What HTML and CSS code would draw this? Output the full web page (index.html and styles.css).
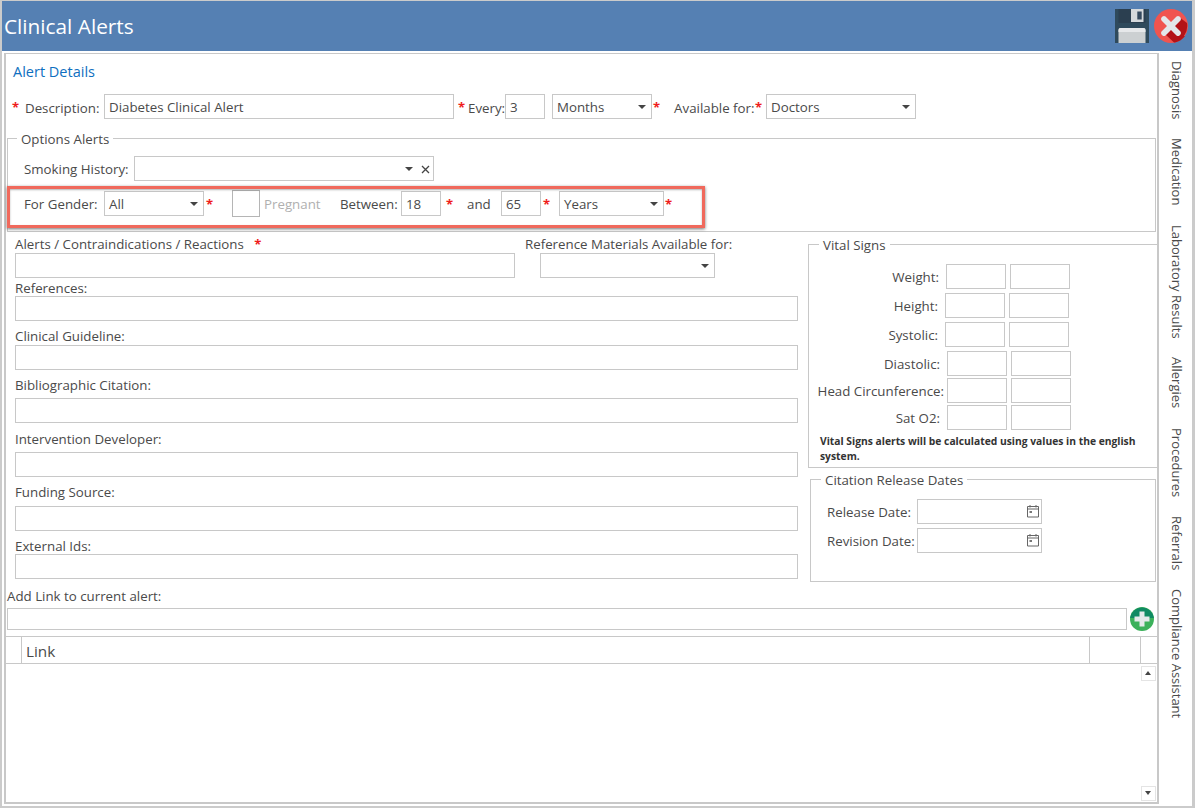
FILE: index.html
```html
<!DOCTYPE html>
<html lang="en">
<head>
<meta charset="utf-8">
<title>Clinical Alerts</title>
<link rel="stylesheet" href="styles.css">
</head>
<body>
<div class="window">
  <header class="titlebar">
    <h1 class="title">Clinical Alerts</h1>
    <div class="title-actions">
      <svg class="save-icon" viewBox="0 0 34 34" width="34" height="34"><path d="M0 0H34V34H0Z" fill="#2f4a5c"/><path d="M3.500 0H30.500V14H3.500Z" fill="#2b3f50"/><path d="M16 0H28.500V13H16Z" fill="#d5d9dc"/><path d="M22.300 2.500H26.700V10.500H22.300Z" fill="#34495e"/><path d="M3.500 21Q3.500 19 5.500 19H28.500Q30.500 19 30.500 21V34H3.500Z" fill="#ccd0d2"/><path d="M3.500 21Q3.500 19 5.500 19H28.500Q30.500 19 30.500 21V23H3.500Z" fill="#e6e8ea"/></svg>
      <svg class="close-icon" viewBox="0 0 34 34" width="34" height="34"><circle cx="17" cy="17" r="17" fill="#f0544f"/><path d="M14 27L31 27A17 17 0 0 1 21 33.5Z M25 8L33 14A17 17 0 0 1 20 33.5L11 25Z" fill="#b31217"/><path d="M11.5 7.5L17 13L22.5 7.5Q24 6.5 25.500 7.500L26.500 8.500Q27.500 10 26.500 11.500L21 17L26.500 22.500Q27.500 24 26.500 25.500L25.500 26.500Q24 27.500 22.500 26.500L17 21L11.500 26.500Q10 27.500 8.500 26.500L7.500 25.500Q6.500 24 7.500 22.500L13 17L7.500 11.500Q6.500 10 7.500 8.500L8.500 7.500Q10 6.500 11.500 7.500Z" fill="#e3e7ea"/></svg>
    </div>
  </header>

  <div class="workspace">
    <main class="panel">
      <h2 class="section-title">Alert Details</h2>

      <div class="row row-description">
        <span class="req req-first">*</span>
        <label class="lbl lbl-description">Description:</label>
        <div class="box w-350">Diabetes Clinical Alert</div>
        <span class="req req-every">*</span>
        <label class="lbl lbl-every">Every:</label>
        <div class="box w-40">3</div>
        <div class="box select w-100 ml-7">Months<i class="caret"></i></div>
        <span class="req req-tight">*</span>
        <label class="lbl lbl-available">Available for:</label>
        <span class="req req-tight req-available">*</span>
        <div class="box select w-150">Doctors<i class="caret"></i></div>
      </div>

      <fieldset class="group group-options">
        <legend class="legend">Options Alerts</legend>
        <div class="row row-smoking">
          <label class="lbl lbl-smoking">Smoking History:</label>
          <div class="box select w-300">
            <i class="caret caret-clear"></i>
            <svg class="clear-x" viewBox="0 0 9 9" width="9" height="9"><path d="M1 1L8 8M8 1L1 8" stroke="#444" stroke-width="1.300" fill="none"/></svg>
          </div>
        </div>
        <div class="row row-gender">
          <label class="lbl lbl-gender">For Gender:</label>
          <div class="box select w-100">All<i class="caret"></i></div>
          <span class="req req-gender">*</span>
          <div class="checkbox"></div>
          <span class="lbl muted">Pregnant</span>
          <label class="lbl lbl-between">Between:</label>
          <div class="box w-40">18</div>
          <span class="req req-18">*</span>
          <span class="lbl lbl-and">and</span>
          <div class="box w-40">65</div>
          <span class="req req-65">*</span>
          <div class="box select w-105 ml-9">Years<i class="caret"></i></div>
          <span class="req req-tight">*</span>
        </div>
        <div class="highlight"></div>
      </fieldset>

      <div class="columns">
        <div class="col-left">
          <div class="row-top">
            <div class="stack">
              <div class="lbl">Alerts / Contraindications / Reactions <span class="req req-alerts">*</span></div>
              <div class="box w-500"></div>
            </div>
            <div class="stack stack-ref">
              <div class="lbl">Reference Materials Available for:</div>
              <div class="box select w-175 ml-15"><i class="caret"></i></div>
            </div>
          </div>
          <div class="field field-ref"><div class="lbl">References:</div><div class="box wide"></div></div>
          <div class="field field-clin"><div class="lbl">Clinical Guideline:</div><div class="box wide"></div></div>
          <div class="field field-bib"><div class="lbl">Bibliographic Citation:</div><div class="box wide"></div></div>
          <div class="field field-dev"><div class="lbl">Intervention Developer:</div><div class="box wide"></div></div>
          <div class="field field-fund"><div class="lbl">Funding Source:</div><div class="box wide"></div></div>
          <div class="field field-ext"><div class="lbl">External Ids:</div><div class="box wide"></div></div>
        </div>

        <div class="col-right">
          <fieldset class="group group-vitals">
            <legend class="legend">Vital Signs</legend>
            <div class="vrow v-weight"><label class="lbl">Weight:</label><div class="box w-60"></div><div class="box w-60"></div></div>
            <div class="vrow v-height"><label class="lbl">Height:</label><div class="box w-60"></div><div class="box w-60"></div></div>
            <div class="vrow v-systolic"><label class="lbl">Systolic:</label><div class="box w-60"></div><div class="box w-60"></div></div>
            <div class="vrow v-diastolic"><label class="lbl">Diastolic:</label><div class="box w-60"></div><div class="box w-60"></div></div>
            <div class="vrow v-head"><label class="lbl">Head Circunference:</label><div class="box w-60"></div><div class="box w-60"></div></div>
            <div class="vrow v-sat"><label class="lbl">Sat O2:</label><div class="box w-60"></div><div class="box w-60"></div></div>
            <p class="note">Vital Signs alerts will be calculated using values in the english system.</p>
          </fieldset>
          <fieldset class="group group-citation">
            <legend class="legend">Citation Release Dates</legend>
            <div class="row row-date">
              <label class="lbl lbl-date">Release Date:</label>
              <div class="box date w-125"><svg class="cal" viewBox="0 0 14 14" width="14" height="14"><path d="M1.500 2.500H12.500V13H1.500Z M1.500 5H12.500 M4 1V3.500 M10 1V3.500" stroke="#666" fill="none"/><path d="M3.500 7H6V9H3.500Z" fill="#777"/></svg></div>
            </div>
            <div class="row row-date row-date-2">
              <label class="lbl lbl-date">Revision Date:</label>
              <div class="box date w-125"><svg class="cal" viewBox="0 0 14 14" width="14" height="14"><path d="M1.500 2.500H12.500V13H1.500Z M1.500 5H12.500 M4 1V3.500 M10 1V3.500" stroke="#666" fill="none"/><path d="M3.500 7H6V9H3.500Z" fill="#777"/></svg></div>
            </div>
          </fieldset>
        </div>
      </div>

      <div class="link-add">
        <div class="lbl">Add Link to current alert:</div>
        <div class="link-row">
          <div class="box link-input"></div>
          <svg class="plus-icon" viewBox="0 0 24 24" width="24" height="24"><circle cx="12" cy="12" r="12" fill="#3cb15b"/><path d="M0.100 11A12 12 0 0 1 23.900 11Z" fill="#108a63"/><path d="M9.500 4.500H14.500V9.500H19.500V14.500H14.500V19.500H9.500V14.500H4.500V9.500H9.500Z" fill="#e4e9ea"/></svg>
        </div>
      </div>

      <section class="table">
        <div class="thead">
          <div class="th th-check"></div>
          <div class="th th-link">Link</div>
          <div class="th th-a"></div>
          <div class="th th-b"></div>
        </div>
        <div class="tbody">
          <div class="scrollbar">
            <div class="sb-btn"><i class="sb-up"></i></div>
            <div class="sb-btn"><i class="sb-down"></i></div>
          </div>
        </div>
      </section>
    </main>

    <nav class="side-tabs">
      <span class="tab">Diagnosis</span>
      <span class="tab">Medication</span>
      <span class="tab">Laboratory Results</span>
      <span class="tab">Allergies</span>
      <span class="tab">Procedures</span>
      <span class="tab">Referrals</span>
      <span class="tab">Compliance Assistant</span>
    </nav>
  </div>
</div>
</body>
</html>
```
FILE: styles.css
```css
* { box-sizing: border-box; }
html, body { margin: 0; height: 100%; }
body {
  background: #fff;
  font-family: "Open Sans", "Liberation Sans", sans-serif;
  font-size: 13.3px;
  color: #4a4a4a;
  overflow: hidden;
}
.window {
  width: 1195px;
  height: 808px;
  border: 1px solid #cbcbcb;
  border-width: 1px 3px 2px 2px;
  display: flex;
  flex-direction: column;
}
.titlebar {
  height: 50px;
  background: #5580b3;
  display: flex;
  align-items: center;
  justify-content: space-between;
  flex: none;
  padding: 0 4px 0 2px;
}
.title { margin: 0; font-size: 20.8px; font-weight: 400; color: #fff; }
.title-actions { display: flex; gap: 5px; }
.save-icon, .close-icon { display: block; }
.workspace { flex: 1; display: flex; padding: 2px 0 0 2px; min-height: 0; }
.panel {
  width: 1155px;
  height: 751px;
  border: 1px solid #c8c8c8;
  border-width: 1px 2px 2px 2px;
  flex: none;
  display: flex;
  flex-direction: column;
}
.section-title {
  margin: 9px 0 0 7px;
  font-size: 14.5px;
  line-height: 18px;
  font-weight: 400;
  color: #0f6fc0;
}
.row { display: flex; align-items: center; }
.lbl { line-height: 16px; white-space: nowrap; flex: none; }
.row-description .lbl { padding-top: 2px; }
.box {
  height: 25px;
  border: 1px solid #c8c8c8;
  background: #fff;
  line-height: 24px;
  padding-left: 4px;
  color: #4a4a4a;
  flex: none;
  position: relative;
}
.select { padding-right: 18px; }
.caret {
  position: absolute;
  right: 5px;
  top: 10px;
  width: 0;
  height: 0;
  border-left: 4px solid transparent;
  border-right: 4px solid transparent;
  border-top: 4px solid #444;
}
.caret-clear { right: 20px; }
.clear-x { position: absolute; right: 3px; top: 8px; }
.w-40 { width: 40px; }
.w-60 { width: 60px; }
.w-100 { width: 100px; }
.w-105 { width: 105px; }
.w-125 { width: 125px; }
.w-150 { width: 150px; }
.w-175 { width: 175px; }
.w-300 { width: 300px; }
.w-350 { width: 350px; }
.w-500 { width: 500px; }
.ml-7 { margin-left: 7px; }
.ml-9 { margin-left: 9px; }
.ml-15 { margin-left: 15px; }
.wide { width: 783px; }
.req { color: #ef1c1c; font-weight: 700; font-size: 13px; line-height: 16px; flex: none; }
.req-first { margin-left: 6px; width: 13px; }
.lbl-description { width: 79px; }
.req-every { margin-left: 4px; width: 10px; }
.lbl-every { width: 37px; }
.req-tight { margin-left: 1px; }
.req-available { width: 11px; }
.lbl-available { margin-left: 14px; width: 80px; }
.row-description { margin-top: 13px; height: 25px; }
.group {
  margin: 0;
  padding: 0;
  border: 1px solid #c8c8c8;
  min-width: 0;
}
.legend { padding: 2px 4px 0; margin-left: 9px; line-height: 16px; font-size: 13.3px; }
.group-options {
  position: relative;
  margin: 10px 0 0 1px;
  width: 1149px;
  height: 103px;
}
.row-smoking { margin: 9px 0 0 16px; height: 25px; }
.lbl-smoking { width: 110px; }
.row-gender { margin: 10px 0 0 16px; height: 25px; }
.lbl-gender { width: 80px; }
.req-gender { margin-left: 2px; width: 26px; }
.checkbox { width: 28px; height: 27px; border: 1px solid #b5b5b5; flex: none; margin-top: -1px; }
.muted { color: #b0b0b0; margin-left: 4px; width: 76px; }
.lbl-between { width: 61px; }
.req-18 { margin-left: 5px; width: 21px; }
.lbl-and { width: 34px; }
.req-65 { margin-left: 2px; width: 7px; }
.highlight {
  position: absolute;
  left: -1px;
  top: 39px;
  width: 698px;
  height: 42px;
  border: 3px solid #f0695c;
  box-shadow: 0 1px 3px rgba(0, 0, 0, 0.55), inset 0 1px 2px rgba(0, 0, 0, 0.3);
}
.columns { display: flex; height: 350px; flex: none; }
.col-left { width: 802px; padding: 4px 0 0 9px; flex: none; }
.row-top { display: flex; }
.stack-ref { margin-left: 10px; }
.stack .lbl { margin-bottom: 1px; }
.req-alerts { margin-left: 7px; }
.field .lbl { padding-top: 2px; height: 18px; }
.field-clin { margin-top: 5px; }
.field-clin .lbl { height: 19px; }
.field-bib { margin-top: 5px; }
.field-bib .lbl { margin-bottom: 5px; }
.field-dev { margin-top: 6px; }
.field-dev .lbl { margin-bottom: 5px; }
.field-fund { margin-top: 5px; }
.field-fund .lbl { margin-bottom: 6px; }
.field-ext { margin-top: 5px; }
.col-right { flex: none; width: 350px; padding-top: 3px; }
.group-vitals {
  width: 349px;
  height: 233px;
  border-right-width: 0;
  padding-top: 11px;
}
.group-vitals .legend { margin-left: 10px; }
.vrow { display: flex; align-items: center; height: 25px; gap: 4px; margin-bottom: 4px; }
.vrow .lbl { text-align: right; margin-right: 3px; }
.v-weight .lbl { width: 130px; }
.v-height .lbl { width: 129px; }
.v-systolic .lbl { width: 129px; }
.v-diastolic .lbl { width: 131px; }
.v-diastolic { margin-bottom: 2px; }
.v-head { margin-bottom: 2px; }
.vrow.v-head .lbl { width: 135px; margin-right: -1px; }
.v-sat .lbl { width: 131px; }
.note { margin: 0 0 0 11px; width: 330px; font-size: 10.3px; line-height: 15px; font-weight: 700; color: #333; }
.group-citation {
  margin: 2px 0 0 2px;
  width: 346px;
  height: 112px;
}
.group-citation .legend { margin-left: 10px; }
.row-date { margin: 11px 0 0 16px; }
.row-date-2 { margin-top: 4px; }
.lbl-date { width: 90px; }
.date { height: 25px; }
.cal { position: absolute; right: 1px; top: 4px; }
.link-add { margin: 6px 0 0 1px; flex: none; }
.link-add .lbl { height: 16px; }
.link-row { display: flex; align-items: center; gap: 3px; margin-top: 3px; height: 24px; }
.link-input { width: 1120px; height: 22px; }
.plus-icon { display: block; flex: none; }
.table {
  margin-top: 5px;
  flex: 1;
  display: flex;
  flex-direction: column;
  min-height: 0;
}
.thead { display: flex; height: 28px; flex: none; border-top: 1px solid #c8c8c8; border-bottom: 1px solid #c8c8c8; }
.th { border-right: 1px solid #c8c8c8; flex: none; }
.th-check { width: 16px; }
.th-link { width: 1068px; padding-left: 4px; font-size: 15.3px; line-height: 28px; color: #4a4a4a; }
.th-a { width: 51px; }
.th-b { width: 15px; border-right: 0; }
.tbody { flex: 1; display: flex; justify-content: flex-end; min-height: 0; }
.scrollbar { width: 17px; display: flex; flex-direction: column; justify-content: space-between; padding: 2px 1px 1px 1px; }
.sb-btn { width: 15px; height: 15px; border: 1px solid #e4e4e4; position: relative; }
.sb-up, .sb-down { position: absolute; left: 3px; top: 4px; width: 0; height: 0; border-left: 3.5px solid transparent; border-right: 3.5px solid transparent; }
.sb-up { border-bottom: 4px solid #444; }
.sb-down { border-top: 4px solid #444; }
.side-tabs {
  flex: 1;
  display: flex;
  flex-direction: column;
  align-items: center;
  gap: 19px;
  padding: 8px 5px 0 7px;
}
.tab { writing-mode: vertical-rl; font-size: 13px; line-height: 18px; color: #4a4a4a; white-space: nowrap; }
```
